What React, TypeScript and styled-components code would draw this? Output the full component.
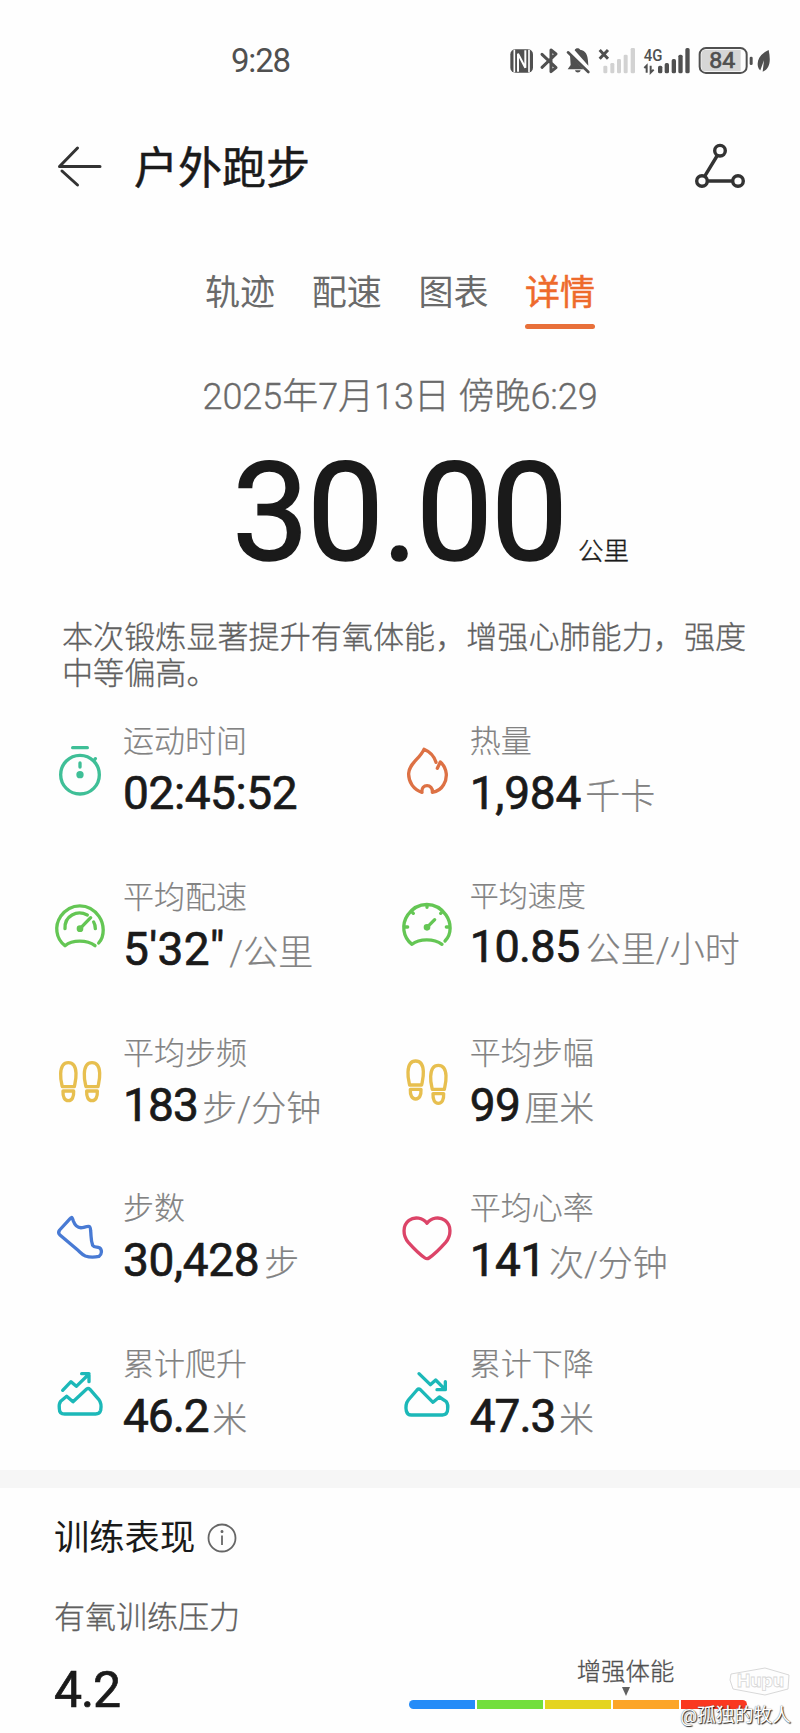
import React from 'react';
import styled, { createGlobalStyle } from 'styled-components';

const GlobalStyle = createGlobalStyle`
  * { box-sizing: border-box; }
  body { margin: 0; background: #fefefe; }
`;

const Screen = styled.main`
  position: relative;
  width: 800px;
  height: 1733px;
  overflow: hidden;
  display: flex;
  flex-direction: column;
  background: #fefefe;
  color: #1a1a1a;
  font-family: Roboto, 'Noto Sans CJK SC', sans-serif;
  white-space: nowrap;
`;

const StatusBar = styled.header`
  height: 120px;
  padding: 2px 20px 0 231px;
  display: flex;
  align-items: center;
  justify-content: space-between;
  color: #505050;
`;

const Clock = styled.span`
  font-size: 33px;
  line-height: 40px;
  letter-spacing: -1.2px;
`;

const TitleBar = styled.div`
  height: 94px;
  padding: 0 55px 0 56px;
  display: flex;
  align-items: center;
  justify-content: space-between;
`;

const TitleGroup = styled.div`
  display: flex;
  align-items: center;
  gap: 30px;
`;

const PageTitle = styled.h1`
  margin: 0;
  padding-top: 3px;
  font-size: 44px;
  line-height: 60px;
  font-weight: 400;
  -webkit-text-stroke: 0.5px currentColor;
`;

const Tabs = styled.nav`
  height: 116px;
  padding: 56px 0 0 205px;
  display: flex;
  gap: 36.7px;
`;

const Tab = styled.span<{ $active?: boolean }>`
  height: 59px;
  font-size: 35px;
  line-height: 48px;
  font-weight: 400;
  -webkit-text-stroke: ${(p) => (p.$active ? '0.5px' : '0')} currentColor;
  color: ${(p) => (p.$active ? '#ee6a2c' : '#6a6a6a')};
  display: flex;
  flex-direction: column;
  justify-content: space-between;
  &::after {
    content: '';
    height: 5px;
    border-radius: 3px;
    background: ${(p) => (p.$active ? '#e8703a' : 'transparent')};
  }
`;

const Summary = styled.section`
  height: 363px;
  display: flex;
  flex-direction: column;
`;

const DateLine = styled.div`
  padding-left: 202.5px;
  margin-top: 43px;
  font-size: 36px;
  line-height: 48px;
  font-weight: 300;
  -webkit-text-stroke: 0.3px currentColor;
  letter-spacing: -0.05px;
  color: #6a6a6a;
`;

const Distance = styled.div`
  height: 140px;
  margin-top: 22px;
  padding-left: 232px;
  display: flex;
  align-items: baseline;
  line-height: 140px;
`;

const DistanceValue = styled.strong`
  font-size: 137px;
  font-weight: 400;
  -webkit-text-stroke: 1.6px currentColor;
  letter-spacing: -2px;
`;

const DistanceUnit = styled.span`
  margin-left: 12px;
  font-size: 25.5px;
  font-weight: 300;
  -webkit-text-stroke: 0.4px currentColor;
`;

const Remark = styled.p`
  width: 700px;
  margin: 37px 0 0 62px;
  font-size: 31.1px;
  line-height: 36px;
  font-weight: 300;
  -webkit-text-stroke: 0.3px currentColor;
  color: #606060;
`;

const Metrics = styled.section`
  height: 777px;
  padding-left: 52px;
  display: grid;
  grid-template-columns: 346.7px 1fr;
  grid-auto-rows: 155.75px;
`;

const MetricCell = styled.div`
  display: flex;
  align-items: flex-start;
  gap: 15px;
`;

const MetricIcon = styled.svg`
  width: 56px;
  height: 56px;
  margin-top: 50px;
  flex: none;
  overflow: visible;
  fill: none;
  stroke: currentColor;
  stroke-width: 10;
  stroke-linecap: round;
  stroke-linejoin: round;
`;

const MetricBody = styled.div`
  padding-top: 29px;
`;

const MetricLabel = styled.div<{ $compact?: boolean }>`
  font-size: ${(p) => (p.$compact ? 29 : 31)}px;
  line-height: ${(p) => (p.$compact ? 38 : 40)}px;
  font-weight: 300;
  -webkit-text-stroke: 0.2px currentColor;
  color: #828282;
`;

const MetricReading = styled.div<{ $compact?: boolean }>`
  display: flex;
  align-items: baseline;
  line-height: ${(p) => (p.$compact ? 61 : 62)}px;
`;

const MetricValue = styled.strong<{ $compact?: boolean; $tracking: number }>`
  font-size: ${(p) => (p.$compact ? 45 : 46)}px;
  font-weight: 400;
  -webkit-text-stroke: 0.7px currentColor;
  letter-spacing: ${(p) => p.$tracking}px;
`;

const MetricUnit = styled.span<{ $gap: number }>`
  margin-left: ${(p) => p.$gap}px;
  font-size: 35px;
  font-weight: 300;
  -webkit-text-stroke: 0.2px currentColor;
  color: #828282;
`;

const Divider = styled.div`
  height: 18px;
  background: #f6f6f6;
`;

const Performance = styled.section`
  flex: 1;
  padding: 25px 53px 0 54px;
`;

const SectionTitle = styled.h2`
  margin: 0;
  display: flex;
  align-items: center;
  gap: 12px;
  font-size: 35.3px;
  line-height: 50px;
  font-weight: 400;
`;

const LoadLabel = styled.div`
  margin-top: 35px;
  font-size: 31px;
  line-height: 40px;
  font-weight: 300;
  -webkit-text-stroke: 0.3px currentColor;
  color: #606060;
`;

const LoadRow = styled.div`
  height: 72px;
  margin-top: 14px;
  display: flex;
  justify-content: space-between;
  align-items: flex-start;
`;

const LoadValue = styled.strong`
  font-size: 50px;
  line-height: 76px;
  font-weight: 400;
  -webkit-text-stroke: 0.7px currentColor;
  letter-spacing: -1.2px;
`;

const Gauge = styled.div`
  width: 338px;
  padding-top: 6px;
  display: flex;
  flex-direction: column;
`;

const GaugeMarker = styled.div`
  width: 100px;
  margin-left: 166.5px;
  display: flex;
  flex-direction: column;
  align-items: center;
  font-size: 24.4px;
  line-height: 28px;
  font-weight: 300;
  -webkit-text-stroke: 0.3px currentColor;
  color: #505050;
  &::after {
    content: '';
    margin: 1px 0 4px;
    border: 4.5px solid transparent;
    border-top: 9px solid #606060;
    border-bottom: 0;
  }
`;

const GaugeTrack = styled.div`
  height: 9px;
  display: grid;
  grid-template-columns: repeat(5, 1fr);
  gap: 2px;
  border-radius: 5px;
  overflow: hidden;
`;

const GaugeZone = styled.i<{ $color: string }>`
  background: ${(p) => p.$color};
`;

const Watermark = styled.div`
  position: absolute;
  right: 9px;
  bottom: 5px;
  display: flex;
  flex-direction: column;
  align-items: flex-end;
  gap: 7px;
`;

const WatermarkName = styled.span`
  font-size: 18.8px;
  line-height: 24px;
  color: #ffffff;
  text-shadow: 1px 1px 1px #222, 0 0 1px #555;
`;

const StatusIcons = () => (
  <svg width="270" height="44" viewBox="0 0 810 132" fill="#505050">
    <rect x="1" y="31" width="68" height="70" rx="15" />
    <path d="M13 32V100M57 32V100" stroke="#fefefe" strokeWidth="5" fill="none" />
    <path d="M24 98V44L46 86V34" stroke="#fefefe" strokeWidth="6" fill="none" />
    <path d="M96 46l42 40-15 12V33l15 12-42 40" fill="none" stroke="#505050" strokeWidth="9" strokeLinejoin="round" strokeLinecap="round" />
    <path d="M180 48L221 91H173l9-13zM194 34c3-9 15-7 16-2 18 3 23 16 24 34l1 14zM195 94h17c-2 9-15 9-17 0z" />
    <path d="M174 40l61 59" stroke="#505050" strokeWidth="8" strokeLinecap="round" />
    <path d="M269 33l25 26M294 33l-25 26" stroke="#505050" strokeWidth="9" />
    <g fill="#d2d2d2">
      <rect x="280" y="80" width="12" height="23" rx="4" />
      <rect x="301" y="72" width="12" height="31" rx="4" />
      <rect x="321" y="60" width="12" height="43" rx="4" />
      <rect x="341" y="47" width="12" height="56" rx="4" />
      <rect x="362" y="27" width="13" height="76" rx="4" />
    </g>
    <text x="401" y="65" fontFamily="Roboto, sans-serif" fontSize="50" fontWeight="500" textLength="56" lengthAdjust="spacingAndGlyphs">4G</text>
    <path d="M403 87l7-7v21M422 80v21l9-9" fill="none" stroke="#505050" strokeWidth="6" />
    <rect x="444" y="80" width="13" height="23" rx="5" />
    <rect x="464" y="72" width="13" height="31" rx="5" />
    <rect x="485" y="60" width="13" height="43" rx="5" />
    <rect x="505" y="47" width="13" height="56" rx="5" />
    <rect x="526" y="27" width="13" height="76" rx="5" />
    <rect x="569" y="27" width="141" height="75" rx="19" fill="#fefefe" stroke="#505050" strokeWidth="6" />
    <path d="M588 32H692V97H588Q574 97 574 83V46Q574 32 588 32Z" fill="#d6d6d6" />
    <text x="598" y="87" fontFamily="Roboto, sans-serif" fontSize="66" stroke="#505050" strokeWidth="2" textLength="78" lengthAdjust="spacingAndGlyphs">84</text>
    <rect x="719" y="53" width="9" height="25" rx="4" />
    <path d="M776 33C752 44 739 62 744 83c2 8 7 11 7 11l11-30-4 34c24-10 24-36 18-65z" />
  </svg>
);

const BackIcon = () => (
  <svg width="48" height="48" viewBox="0 0 48 48" fill="none" stroke="#333" strokeWidth="3" strokeLinecap="round" strokeLinejoin="round">
    <path d="M44 23.5H3.5L21.5 5M6 28L21.5 42" />
  </svg>
);

const RouteIcon = () => (
  <svg width="50" height="48" viewBox="0 0 50 48" fill="none" stroke="#333" strokeWidth="3.4">
    <circle cx="25" cy="7.7" r="5.3" />
    <circle cx="7" cy="38" r="5.3" />
    <circle cx="43" cy="38" r="5.3" />
    <path d="M22.3 12.5L9.6 33.3M12.5 38H37.5" />
  </svg>
);

const InfoIcon = () => (
  <svg width="30" height="30" viewBox="0 0 30 30" fill="none" stroke="#666" strokeWidth="1.8">
    <circle cx="15" cy="15" r="13.5" />
    <path d="M15 12.5V22" />
    <circle cx="15" cy="8.5" r="1" fill="#666" stroke="none" />
    <circle cx="15" cy="8.5" r="0.6" />
  </svg>
);

const Sole = ({ dx, dy }: { dx: number; dy: number }) => (
  <g transform={`translate(${dx} ${dy})`}>
    <path d="M37 1069C33 1052 31 1046 32 1030C33 1006 42 997 55 997C69 997 77 1008 78 1028C79 1044 76 1054 73 1069ZM39 1082H71C72 1100 66 1111 55 1111C44 1111 38 1100 39 1082Z" />
  </g>
);

type Metric = {
  label: string;
  value: string;
  unit?: string;
  gap?: number;
  tracking?: number;
  compact?: boolean;
  color: string;
  viewBox: string;
  art: React.ReactNode;
};

const metrics: Metric[] = [
  {
    label: '运动时间', value: '02:45:52', tracking: -0.4, color: '#3fbf97', viewBox: '6 40 168 168',
    art: (
      <>
        <circle cx="90" cy="135" r="58" />
        <path d="M68 54H112M134 90l2-3M90 100V112" />
        <circle cx="90" cy="135" r="6" fill="currentColor" />
      </>
    ),
  },
  {
    label: '热量', value: '1,984', unit: '千卡', gap: 4, tracking: -0.2, color: '#dd7144', viewBox: '1046 40 168 168',
    art: <path d="M1115 188C1090 180 1074 157 1075 131C1077 100 1108 88 1121 59C1140 67 1152 81 1157 98M1161 116L1170 97C1193 118 1191 147 1180 165C1171 181 1160 186 1146 188C1149 161 1111 161 1115 188" />,
  },
  {
    label: '平均配速', value: '5\'32"', unit: '/公里', gap: 4.5, tracking: 0.3, color: '#64c654', viewBox: '6 508 168 168',
    art: (
      <>
        <path d="M146 640C165 619 163 583 147 560C117 518 62 518 32 560C13 588 17 627 45 648C67 630 111 630 135 648" />
        <path d="M45 597C43 558 81 540 112 556M136 597C136 587 134 582 131 577M90 597L122 564" />
        <circle cx="90" cy="597" r="5" fill="currentColor" />
      </>
    ),
  },
  {
    label: '平均速度', value: '10.85', unit: '公里/小时', gap: 6, tracking: -0.6, compact: true, color: '#64c654', viewBox: '1046 508 168 168',
    art: (
      <>
        <path d="M1184 634C1205 613 1203 579 1187 556C1157 514 1102 514 1072 556C1053 584 1057 623 1085 644C1107 626 1151 626 1175 644" />
        <path d="M1130 526v7M1086 548l3 3M1174 548l-3 3M1064 592h8M1196 592h-8M1130 593L1153 570" />
        <circle cx="1130" cy="593" r="5" fill="currentColor" />
      </>
    ),
  },
  {
    label: '平均步频', value: '183', unit: '步/分钟', gap: 4.5, tracking: -0.9, color: '#e7bf4f', viewBox: '6 974 168 168',
    art: <><Sole dx={0} dy={0} /><Sole dx={71} dy={0} /></>,
  },
  {
    label: '平均步幅', value: '99', unit: '厘米', gap: 4, tracking: -0.6, color: '#e7bf4f', viewBox: '1046 974 168 168',
    art: <><Sole dx={1041} dy={-5} /><Sole dx={1109} dy={8} /></>,
  },
  {
    label: '步数', value: '30,428', unit: '步', gap: 5, tracking: -0.35, color: '#487ad4', viewBox: '6 31 168 168',
    art: <path d="M61 56C66 50 68 56 70 64C77 83 90 86 101 83C119 78 121 78 122 94C124 112 122 121 128 137C133 145 141 141 148 144C157 150 156 164 147 170C134 173 118 173 106 169C96 165 91 158 84 152L29 105Q23 99 29 91Z" />,
  },
  {
    label: '平均心率', value: '141', unit: '次/分钟', gap: 3.5, tracking: -0.6, color: '#dc4468', viewBox: '1046 31 168 168',
    art: <path d="M1130 71C1117 54 1093 50 1076 62C1056 77 1057 108 1074 128C1090 146 1111 166 1124 175Q1130 179 1136 175C1149 166 1170 146 1186 128C1203 108 1204 77 1184 62C1167 50 1143 54 1130 71Z" />,
  },
  {
    label: '累计爬升', value: '46.2', unit: '米', gap: 3.5, tracking: -1, color: '#1cb8b8', viewBox: '6 499 168 168',
    art: (
      <>
        <path d="M38 572L63 546L79 560L117 523M95 522H117V546" />
        <path d="M32 605L50 590L69 606L110 568Q115 564 120 569L146 599Q156 612 152 632Q149 643 137 643H44Q28 643 28 627Q26 613 32 605Z" />
      </>
    ),
  },
  {
    label: '累计下降', value: '47.3', unit: '米', gap: 3.5, tracking: -1, color: '#1cb8b8', viewBox: '1046 499 168 168',
    art: (
      <>
        <path d="M1106 522L1140 555L1156 541L1184 569M1160 570H1185V546" />
        <path d="M1188 606L1167 592L1148 608L1110 570Q1105 566 1100 571L1074 601Q1064 614 1068 634Q1071 646 1083 646H1176Q1192 645 1192 628Q1194 614 1188 606Z" />
      </>
    ),
  },
];

const zones = ['#248cf8', '#72df3c', '#e4d420', '#fca528', '#fa3820'];

const BrandBadge = () => (
  <svg width="62" height="30" viewBox="0 0 62 30" fill="none" stroke="#d8d8d8" strokeWidth="1">
    <path d="M2 7L36 1L60 8L59 22L36 28L4 22L1 13Z" />
    <text x="8" y="20" fontFamily="Inter, sans-serif" fontSize="18" fontWeight="800" fill="#fff" strokeWidth="0.8" textLength="47" lengthAdjust="spacingAndGlyphs">Hupu</text>
  </svg>
);

export default function App() {
  return (
    <>
      <GlobalStyle />
      <Screen>
        <StatusBar>
          <Clock>9:28</Clock>
          <StatusIcons />
        </StatusBar>
        <TitleBar>
          <TitleGroup>
            <BackIcon />
            <PageTitle>户外跑步</PageTitle>
          </TitleGroup>
          <RouteIcon />
        </TitleBar>
        <Tabs>
          <Tab>轨迹</Tab>
          <Tab>配速</Tab>
          <Tab>图表</Tab>
          <Tab $active>详情</Tab>
        </Tabs>
        <Summary>
          <DateLine>2025年7月13日 傍晚6:29</DateLine>
          <Distance>
            <DistanceValue>30.00</DistanceValue>
            <DistanceUnit>公里</DistanceUnit>
          </Distance>
          <Remark>
            本次锻炼显著提升有氧体能，增强心肺能力，强度
            <br />
            中等偏高。
          </Remark>
        </Summary>
        <Metrics>
          {metrics.map((m) => (
            <MetricCell key={m.label}>
              <MetricIcon viewBox={m.viewBox} color={m.color}>{m.art}</MetricIcon>
              <MetricBody>
                <MetricLabel $compact={m.compact}>{m.label}</MetricLabel>
                <MetricReading $compact={m.compact}>
                  <MetricValue $compact={m.compact} $tracking={m.tracking ?? 0}>{m.value}</MetricValue>
                  {m.unit && <MetricUnit $gap={m.gap ?? 6}>{m.unit}</MetricUnit>}
                </MetricReading>
              </MetricBody>
            </MetricCell>
          ))}
        </Metrics>
        <Divider />
        <Performance>
          <SectionTitle>
            训练表现
            <InfoIcon />
          </SectionTitle>
          <LoadLabel>有氧训练压力</LoadLabel>
          <LoadRow>
            <LoadValue>4.2</LoadValue>
            <Gauge>
              <GaugeMarker>增强体能</GaugeMarker>
              <GaugeTrack>
                {zones.map((c) => (
                  <GaugeZone key={c} $color={c} />
                ))}
              </GaugeTrack>
            </Gauge>
          </LoadRow>
        </Performance>
        <Watermark>
          <BrandBadge />
          <WatermarkName>@孤独的牧人</WatermarkName>
        </Watermark>
      </Screen>
    </>
  );
}
